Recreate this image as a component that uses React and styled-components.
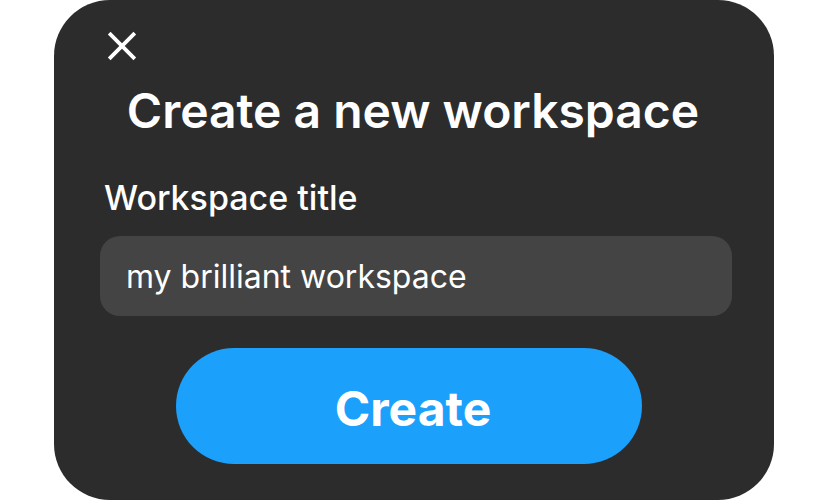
import React from "react";
import styled, { createGlobalStyle } from "styled-components";

const GlobalStyle = createGlobalStyle`
  * { box-sizing: border-box; }
  body {
    margin: 0;
    background: #ffffff;
    font-family: Inter, "Liberation Sans", sans-serif;
  }
`;

const Page = styled.main`
  display: flex;
  justify-content: center;
  padding: 0 54px;
`;

const Dialog = styled.form`
  display: flex;
  flex-direction: column;
  flex: 1;
  max-width: 960px;
  padding: 30px 42px 36px 46px;
  border-radius: 56px;
  background: #2c2c2c;
  color: #ffffff;
`;

const CloseButton = styled.button`
  display: flex;
  align-self: flex-start;
  margin-left: 6px;
  padding: 0;
  border: 0;
  background: none;
  color: inherit;
  cursor: pointer;
`;

const Title = styled.h1`
  margin: 20px 6px 0 0;
  font-size: 48px;
  font-weight: 600;
  line-height: 58px;
  text-align: center;
`;

const Label = styled.label`
  margin: 36px 0 16px 4px;
  font-size: 34px;
  font-weight: 500;
  line-height: 44px;
`;

const TextInput = styled.input`
  width: 100%;
  height: 80px;
  padding: 0 26px;
  border: 0;
  border-radius: 20px;
  outline: none;
  background: #444444;
  color: #ffffff;
  font-family: inherit;
  font-size: 32px;
`;

const CreateButton = styled.button`
  align-self: center;
  width: 466px;
  max-width: 100%;
  height: 116px;
  margin: 32px 14px 0 0;
  padding: 4px 0 0 8px;
  border: 0;
  border-radius: 58px;
  background: #1ba0fc;
  color: #ffffff;
  font-family: inherit;
  font-size: 48px;
  font-weight: 700;
  cursor: pointer;
`;

const CloseIcon = () => (
  <svg width="32" height="32" viewBox="0 0 32 32" fill="none" aria-hidden="true">
    <path
      d="M3.2 3.2L28.8 28.8M28.8 3.2L3.2 28.8"
      stroke="currentColor"
      strokeWidth="3.8"
    />
  </svg>
);

export default function App() {
  return (
    <>
      <GlobalStyle />
      <Page>
        <Dialog aria-labelledby="dialog-title" onSubmit={(event) => event.preventDefault()}>
          <CloseButton type="button" aria-label="Close">
            <CloseIcon />
          </CloseButton>
          <Title id="dialog-title">Create a new workspace</Title>
          <Label htmlFor="workspace-title">Workspace title</Label>
          <TextInput id="workspace-title" type="text" defaultValue="my brilliant workspace" />
          <CreateButton type="submit">Create</CreateButton>
        </Dialog>
      </Page>
    </>
  );
}
